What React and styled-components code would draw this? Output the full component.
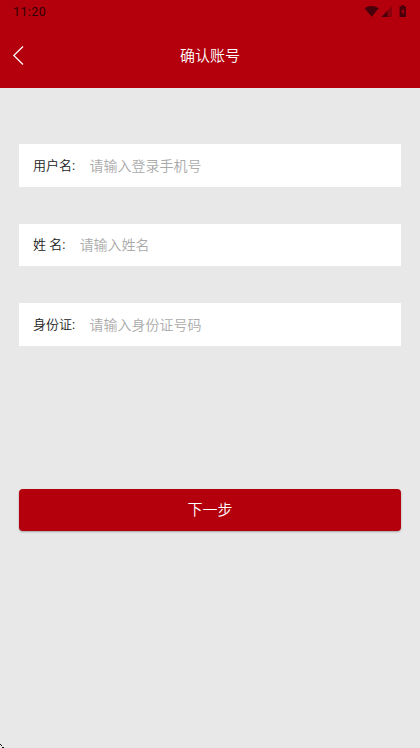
import React from 'react'
import styled, { createGlobalStyle } from 'styled-components'

const GlobalStyle = createGlobalStyle`
  * {
    box-sizing: border-box;
  }
  body {
    margin: 0;
    background: #e8e8e8;
    font-family: Roboto, 'Noto Sans CJK SC', sans-serif;
  }
`
const Screen = styled.div`
  position: relative;
  display: flex;
  flex-direction: column;
  height: 748px;
  overflow: hidden;
  background: #e8e8e8;
`
const Header = styled.header`
  height: 88px;
  background: #b3000c;
`
const StatusBar = styled.div`
  display: flex;
  align-items: center;
  justify-content: space-between;
  height: 23px;
  padding-left: 13px;
`
const Clock = styled.span`
  font-size: 12.5px;
  line-height: 23px;
  letter-spacing: 0.4px;
  color: #300006;
`
const StatusIcons = styled.svg`
  display: block;
  width: 60px;
  height: 23px;
`
const TitleBar = styled.div`
  display: grid;
  grid-template-columns: 40px 1fr 40px;
  align-items: center;
  height: 65px;
`
const BackButton = styled.button`
  width: 40px;
  height: 40px;
  padding: 0;
  border: 0;
  background: none;

  svg {
    display: block;
  }
`
const Title = styled.h1`
  margin: 0;
  font-size: 15px;
  font-weight: 350;
  line-height: 22px;
  text-align: center;
  color: #fff;
`
const Form = styled.form`
  display: flex;
  flex-direction: column;
  padding: 56.4px 19px 0;
`
const Fields = styled.div`
  display: flex;
  flex-direction: column;
  gap: 37.3px;
`
const Field = styled.label`
  display: flex;
  align-items: center;
  height: 42.2px;
  padding: 1px 14px 0;
  background: #fff;
`
const FieldName = styled.span`
  font-size: 13px;
  font-weight: 350;
  line-height: 20px;
  white-space: nowrap;
  color: #222;
`
const Colon = styled.span`
  font-weight: 400;
`
const Input = styled.input`
  flex: 1;
  min-width: 0;
  height: 24px;
  margin-left: 14.3px;
  padding: 0;
  border: 0;
  outline: 0;
  font-family: inherit;
  font-size: 14px;
  font-weight: 350;
  color: #333;

  &::placeholder {
    color: #aaa;
    opacity: 1;
  }
`
const NextButton = styled.button`
  height: 42px;
  margin-top: 143px;
  padding: 0 0 2px;
  border: 0;
  border-radius: 4px;
  background: #b3000c;
  box-shadow: 0 1px 2px rgba(0, 0, 0, 0.3);
  font-family: inherit;
  font-size: 15px;
  font-weight: 350;
  color: #fff;
`
const Corner = styled.svg`
  position: absolute;
  left: 0;
  bottom: 0;
`

const fields = [
  { name: '用户名', hint: '请输入登录手机号' },
  { name: '姓 名', hint: '请输入姓名' },
  { name: '身份证', hint: '请输入身份证号码' },
]

function App() {
  return (
    <Screen>
      <GlobalStyle />
      <Header>
        <StatusBar>
          <Clock>11:20</Clock>
          <StatusIcons viewBox="0 0 60 23">
            <path d="M4.5 8.3Q11.5 3.6 18.8 8.3L11.7 16.7Z" fill="#48000a" />
            <path d="M32 6V17H21.5Z" fill="#8a000b" />
            <path d="M27.5 10.7V17H21.5Z" fill="#48000a" />
            <path d="M39.6 6.4H41.3V5.2H44.3V6.4H46V17H39.6Z" fill="#48000a" />
            <path d="M43.5 8L41.3 12H42.7V15L44.7 11H43.5Z" fill="#b3000c" />
          </StatusIcons>
        </StatusBar>
        <TitleBar>
          <BackButton type="button">
            <svg width="40" height="40" viewBox="0 0 40 40" fill="none" stroke="#fff" strokeWidth="1.2">
              <path d="M23 10.5L13.8 19.5L23 28.5" />
            </svg>
          </BackButton>
          <Title>确认账号</Title>
        </TitleBar>
      </Header>
      <Form>
        <Fields>
          {fields.map((field) => (
            <Field key={field.name}>
              <FieldName>
                {field.name}
                <Colon>:</Colon>
              </FieldName>
              <Input placeholder={field.hint} />
            </Field>
          ))}
        </Fields>
        <NextButton type="button">下一步</NextButton>
      </Form>
      <Corner width="4" height="4" viewBox="0 0 4 4">
        <path d="M0 0H1V1H0ZM1 1H2V2H1ZM2 3H4V4H2Z" fill="#111" />
      </Corner>
    </Screen>
  )
}

export default App
